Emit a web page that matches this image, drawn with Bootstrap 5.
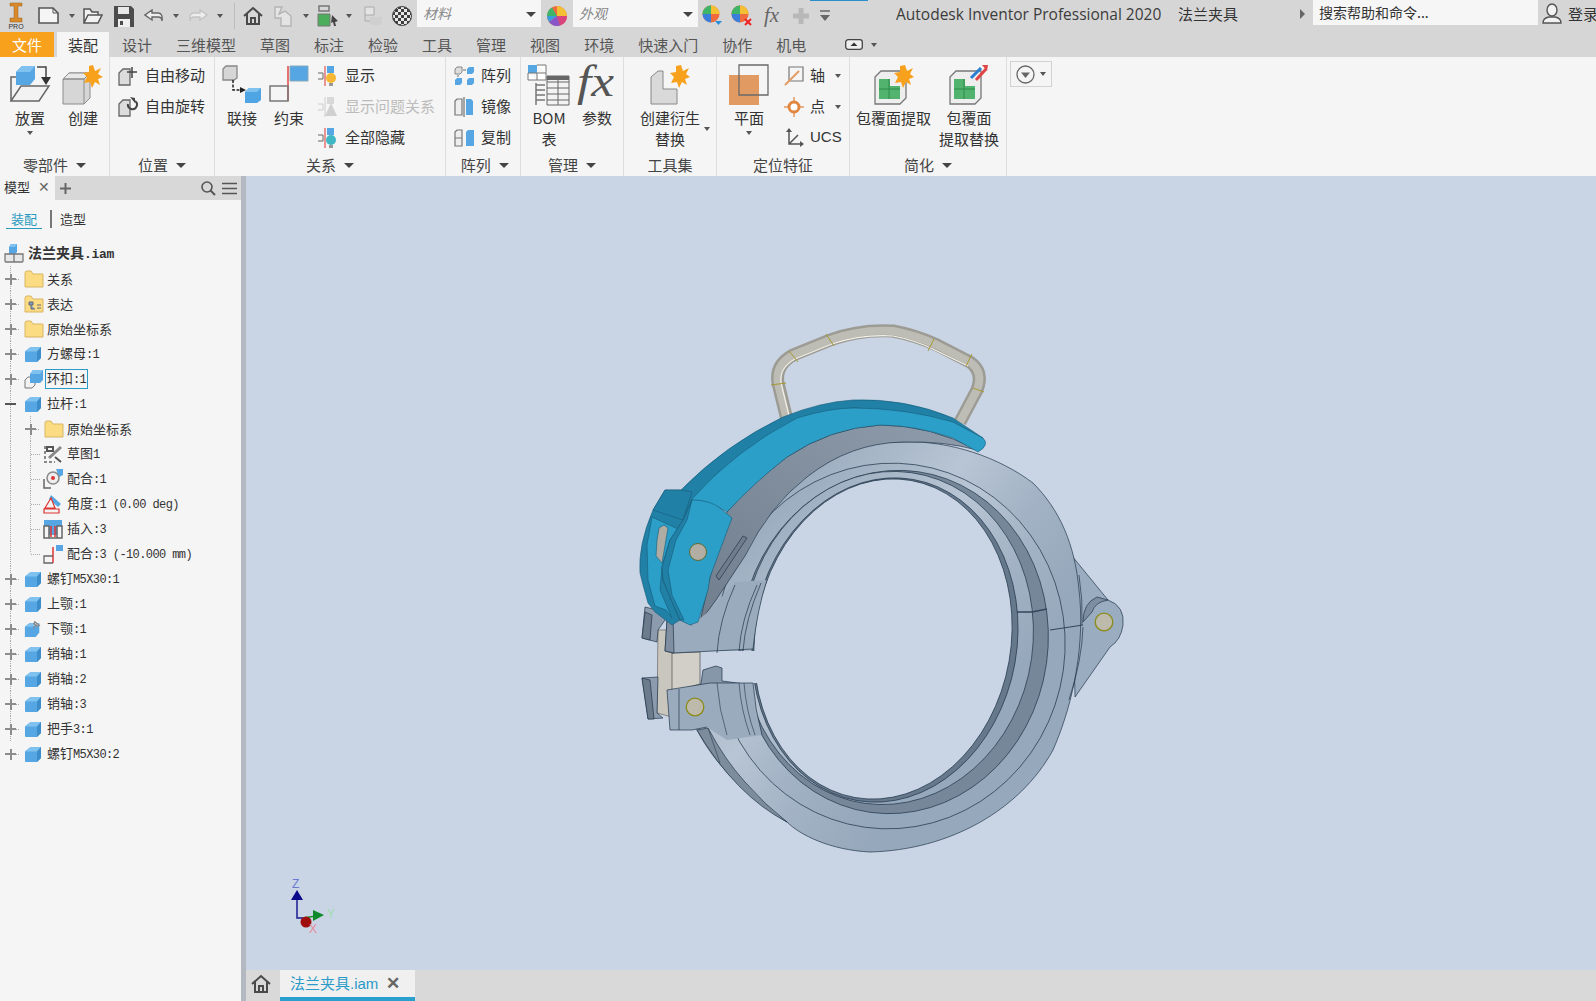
<!DOCTYPE html>
<html lang="zh">
<head>
<meta charset="utf-8">
<title>Autodesk Inventor Professional 2020</title>
<link href="https://cdn.jsdelivr.net/npm/bootstrap@5.3.0/dist/css/bootstrap.min.css" rel="stylesheet">
<style>
html,body{margin:0;height:1001px;overflow:hidden;background:#f5f5f5;color:#333;font-family:"Noto Sans CJK SC","Liberation Sans",sans-serif;font-size:15px}
svg{display:block;flex:none}
.defs-box{width:0;height:0;overflow:hidden}
.app{width:1596px;height:1001px;overflow:hidden}
/* top bar */
.topbar{height:32px;background:#d6d6d6}
.topbar>*{flex:none}
.m1{margin-left:1px}.m2{margin-left:2px}.m3{margin-left:3px}.m4{margin-left:4px}.m5{margin-left:5px}.m6{margin-left:6px}.m7{margin-left:7px}.m8{margin-left:8px}.m9{margin-left:9px}.m10{margin-left:10px}.m11{margin-left:11px}.m12{margin-left:12px}.m14{margin-left:14px}
.tri{width:0;height:0;border-left:3.5px solid transparent;border-right:3.5px solid transparent;border-top:4px solid #555;flex:none}
.tri.big{border-left-width:5px;border-right-width:5px;border-top-width:5px;border-top-color:#444}
.vsep{width:1px;height:26px;background:#bdbdbd}
.tinput{height:27px;background:#f6f6f6;font-style:italic;color:#888;font-size:14px;align-self:flex-start;padding-left:6px}
.w-mat{width:124px;margin-left:5px}
.w-app{width:125px;margin-left:5px}
.tinput .tri{margin-right:5px;margin-top:2px}
.toptitle{margin-left:66px;font-family:"Open Sans","Liberation Sans",sans-serif;font-size:15.5px;color:#3c3c3c;white-space:nowrap;width:268px;padding-bottom:3px}
.topdoc{margin-left:14px;width:63px;font-size:15px;white-space:nowrap;padding-bottom:4px}
.tri-r{width:0;height:0;border-top:5px solid transparent;border-bottom:5px solid transparent;border-left:5px solid #666;margin-left:59px;margin-bottom:4px}
.searchbox{width:225px;height:25px;background:#f6f6f6;margin-left:8px;padding-left:6px;font-size:14px;line-height:25px;align-self:flex-start}
.login{margin-left:6px;font-size:15px;white-space:nowrap;padding-bottom:4px}
.bluemark{position:absolute;left:810px;top:0;width:58px;height:1px;background:#2a8fc8}
.upicon{margin-bottom:4px}
/* tabs */
.tabstrip{height:25px;background:#d6d6d6;line-height:25px}
.rtab{padding:0 12px;color:#555;white-space:nowrap}
.rtab.file{width:54px;padding:0;text-align:center;background:#f7a11d;color:#fff}
.rtab.on{width:52px;margin-left:3px;padding:0;text-align:center;background:#f5f5f5;color:#333;margin-right:1px}
.rtab.view{padding:0;margin-left:27px}
/* ribbon */
.ribbon{height:119px;background:#f5f5f5}
.rgrp{height:119px;border-right:1px solid #dedede;flex:none}
.g1{width:110px}.g2{width:105px}.g3{width:231px}.g4{width:75px}.g5{width:103px}.g6{width:93px}.g7{width:133px}.g8{width:157px}
.rbody{height:97px;display:flex}
.rlabel{height:22px;line-height:20px;gap:8px;color:#444;white-space:nowrap}
.rbig{display:flex;flex-direction:column;align-items:center;padding-top:8px;line-height:20.5px;text-align:center;flex:none;white-space:nowrap}
.rbig svg{margin-bottom:3px;overflow:visible}
.w40{width:40px}.w42{width:42px}.w50{width:50px}.w62{width:62px}.w75{width:75px}.w60{width:60px}
.p7{padding-left:7px}.p8{padding-left:8px}.p10{padding-left:10px}.p12{padding-left:12px}.p15{padding-left:15px}.p6{padding-left:6px}
.rows{display:flex;flex-direction:column;padding-top:3px;flex:none}
.rsmall{height:31px;display:flex;align-items:center;gap:7px;white-space:nowrap}
.rsmall.tight{gap:6px}
.muted{color:#bcbcbc}
.rbig .tri{margin-top:2px}
.after-tri{margin:70px 0 0 3px}
.gapl7{margin-left:7px}.gapl6{margin-left:6px}.gapl8{margin-left:8px}.gapl13{margin-left:13px}.gapl15{margin-left:15px}.gapl19{margin-left:19px}
.extra{width:42px;height:26px;margin:4px 0 0 3px;border:1px solid #d2d2d2;gap:5px}
/* main */
.mainarea{height:825px}
.side{width:241px;background:#f5f5f5;flex:none}
.split{width:5px;background:#b4b9c1;flex:none}
.sidehead{height:24px;background:#d8d8d8}
.sidetab{width:55px;height:24px;background:#f5f5f5;font-size:13px;padding:0 0 2px 4px;gap:8px}
.xclose{color:#666;font-size:14px;font-family:"Liberation Sans",sans-serif}
.subtabs{height:38px;font-size:13px;padding-left:6px;margin-bottom:2px}
.subon{width:36px;text-align:center;color:#2a9ac0;border-bottom:1px solid #2a9ac0;line-height:17px;height:19px;margin-top:1px}
.subbar{width:2px;height:18px;background:#777;margin:0 8px}
.trow{height:25px;display:flex;align-items:center;font-size:13px;white-space:nowrap;color:#333}
.ttxt{margin-left:3px;padding:0 2px}
.ttxt.m1{margin-left:1px}
.ttxt.m2{margin-left:2px}
.lat{font-family:"Liberation Mono",monospace;font-size:12px;letter-spacing:-.6px}
.rootrow{font-weight:700;padding-left:4px;height:26px;font-size:14px}
.rootrow .ttxt{margin-left:2px}
.rootrow .lat{font-size:13px;font-weight:700;letter-spacing:-.3px}
.dotv{background:repeating-linear-gradient(#aaa 0 1px,transparent 1px 2px) 10px 0/1px 100% no-repeat}
.tcell{width:20px;height:25px;flex:none}
.texp{width:20px;height:25px;flex:none;margin-right:4px;background:
 linear-gradient(#8c8c8c,#8c8c8c) 5px 12px/11px 2px no-repeat,
 linear-gradient(#8c8c8c,#8c8c8c) 9.5px 7.5px/2px 11px no-repeat,
 repeating-linear-gradient(90deg,#aaa 0 1px,transparent 1px 2px) 16px 12.5px/8px 1px no-repeat,
 repeating-linear-gradient(#aaa 0 1px,transparent 1px 2px) 10px 0/1px 100% no-repeat}
.texp.minus{background:linear-gradient(#555,#555) 5px 12px/11px 2px no-repeat,repeating-linear-gradient(#aaa 0 1px,transparent 1px 2px) 10px 0/1px 100% no-repeat}
.texp.last{background:
 linear-gradient(#8c8c8c,#8c8c8c) 5px 12px/11px 2px no-repeat,
 linear-gradient(#8c8c8c,#8c8c8c) 9.5px 7.5px/2px 11px no-repeat,
 repeating-linear-gradient(90deg,#aaa 0 1px,transparent 1px 2px) 16px 12.5px/8px 1px no-repeat}
.tleaf{width:20px;height:25px;flex:none;margin-right:3px;background:
 repeating-linear-gradient(90deg,#aaa 0 1px,transparent 1px 2px) 11px 12.5px/10px 1px no-repeat,
 repeating-linear-gradient(#aaa 0 1px,transparent 1px 2px) 10px 0/1px 100% no-repeat}
.tleaf.end{background:
 repeating-linear-gradient(90deg,#aaa 0 1px,transparent 1px 2px) 11px 12.5px/10px 1px no-repeat,
 repeating-linear-gradient(#aaa 0 1px,transparent 1px 2px) 10px 0/1px 50% no-repeat}
.selbox{border:1px solid #2a9ac8;padding:0 1px;line-height:16px;margin-left:1px}
/* canvas */
.workcol{width:1350px}
.cv{width:1350px;height:794px;background:#c9d5e5}
.doctabs{height:31px;background:#d9d9d9}
.doctab{width:135px;height:31px;margin-left:9px;background:#f0f0f0;border-bottom:4px solid #2aa0cf;color:#2a9ac8;font-size:15px;padding:0 15px 0 10px;justify-content:space-between}
.doctab .xclose{font-size:17px;font-weight:700;color:#666}
.dt-lat{font-family:"Liberation Sans",sans-serif}
.fxsvg{overflow:visible}
</style>
</head>
<body>
<svg class="defs-box" aria-hidden="true">
<defs>
<symbol id="cube" viewBox="0 0 18 18"><path d="M1 6.5 6 2.5Q7 2 9 2H17V13L13 17H2Q1 17 1 16Z" fill="#55a6e2"/><path d="M1 6.5 6 2.5Q7 2 9 2H17L13 6.5Z" fill="#7fc1ef"/><path d="M13 6.5 17 2V13L13 17Z" fill="#3e8dcb"/></symbol>
<symbol id="cubegrey" viewBox="0 0 20 20"><path d="M1 11 4 8H11V16L8 19H1Z" fill="#f2f2f2" stroke="#777"/><path d="M6 5 9 1H19V11L16 14H6Z" fill="#55a6e2"/><path d="M6 5 9 1H19L16 5Z" fill="#7fc1ef"/></symbol>
<symbol id="cubepin" viewBox="0 0 20 20"><path d="M1 7.5 6 3.5H17V14L13 19H1Z" fill="#55a6e2"/><path d="M1 7.5 6 3.5H17L13 7.5Z" fill="#7fc1ef"/><path d="M10 9 13 6M12 2 17 6 15 7 11 4Z" stroke="#888" stroke-width="1.4" fill="#ddd"/></symbol>
<symbol id="rootasm" viewBox="0 0 20 20"><path d="M5 4 7 1H13V9L11 11H5Z" fill="#55a6e2"/><path d="M5 4 7 1H13L11 4Z" fill="#7fc1ef"/><path d="M1 11H19V18Q19 19 18 19H2Q1 19 1 18ZM10 11V19" fill="#e8e8e8" stroke="#777" stroke-width="1.3"/></symbol>
<symbol id="folder" viewBox="0 0 20 18"><path d="M1 3Q1 1 3 1H7L9 4H19V17H1Z" fill="#fbdc82" stroke="#d9b565"/></symbol>
<symbol id="folderpos" viewBox="0 0 20 18"><path d="M1 3Q1 1 3 1H7L9 4H19V17H1Z" fill="#fbdc82" stroke="#d9b565"/><path d="M5 7H9V10H5ZM7 10V14H11M13 10H17M13 13H17" fill="#7b9fbe" stroke="#667" /></symbol>
<symbol id="sketch" viewBox="0 0 20 20"><path d="M2 2V17M1 18H12" stroke="#666" stroke-width="1.5" stroke-dasharray="3 2" fill="none"/><path d="M6 14 18 3" stroke="#888" stroke-width="3"/><path d="M4 3H10V7H4ZM12 13 18 18" stroke="#555" stroke-width="2" fill="none"/></symbol>
<symbol id="mate" viewBox="0 0 20 20"><path d="M13 0H20V6L16 8Z" fill="#55a6e2"/><circle cx="10" cy="9" r="6" fill="#eee" stroke="#888" stroke-width="1.5"/><circle cx="10" cy="9" r="2" fill="#d33"/><path d="M1 10V19H8" fill="none" stroke="#666" stroke-width="1.5"/></symbol>
<symbol id="angle" viewBox="0 0 20 20"><path d="M8 1 18 10 15 13 6 5Z" fill="#55a6e2"/><path d="M2 14 8 4 12 14ZM1 15H16V19H1Z" fill="#f3f3f3" stroke="#d33" stroke-width="1.2"/></symbol>
<symbol id="insert" viewBox="0 0 20 20"><path d="M1 1H19V7H14V16H6V7H1Z" fill="#55a6e2"/><path d="M1 7H6V19H1ZM14 7H19V19H14ZM6 19H14" fill="none" stroke="#666" stroke-width="1.5"/><path d="M8 7V18M12 7V18" stroke="#d33" stroke-width="1.5"/></symbol>
<symbol id="mate3" viewBox="0 0 20 20"><path d="M13 1H20V7H13Z" fill="#55a6e2"/><path d="M10 3V19" stroke="#d33" stroke-width="1.5"/><path d="M10 12H1V19H10" fill="none" stroke="#666" stroke-width="1.3"/></symbol>
<symbol id="hometop" viewBox="0 0 20 20"><path d="M1 10 10 2 19 10M4 8V18H16V8M8 18V12H12V18" fill="none" stroke="#4a4a4a" stroke-width="2"/></symbol>
</defs>
</svg>

<div class="app d-flex flex-column position-relative">
  <div class="bluemark"></div>
  <!-- title bar -->
  <div class="topbar d-flex align-items-center">
    <svg class="m8" width="16" height="28" viewBox="0 0 16 28"><path d="M2 1H14V4H10V16H14V20H2V16H6V4H2Z" fill="#d98a2b" stroke="#9a5f1c" stroke-width=".5"/><text x="8" y="27" font-size="7" text-anchor="middle" fill="#333" font-family="Liberation Sans">PRO</text></svg>
    <svg class="m14" width="22" height="20" viewBox="0 0 22 20"><path d="M1 2H15L20 7V17H1Z" fill="#f5f5f5" stroke="#555" stroke-width="1.6"/><path d="M15 2V7H20" fill="none" stroke="#555"/></svg>
    <span class="tri m9"></span>
    <svg class="m8" width="20" height="18" viewBox="0 0 20 18"><path d="M1 16V2H7L9 5H15V8M1 16 5 8H19L15 16Z" fill="#f2f2f2" stroke="#555" stroke-width="1.5"/></svg>
    <svg class="m11" width="20" height="21" viewBox="0 0 20 21"><path d="M0 0H17L20 3V21H0Z" fill="#4c4c4c"/><path d="M4 1H15V8H4Z" fill="#e8e8e8"/><path d="M4 13H16V21H4Z" fill="#f0f0f0"/><path d="M6 15H9V19H6Z" fill="#4c4c4c"/></svg>
    <svg class="m10" width="20" height="14" viewBox="0 0 20 14"><path d="M8 1 1 6 8 11V8H14Q18 8 18 12 19 4 14 4H8Z" fill="#eee" stroke="#666" stroke-width="1.4"/></svg>
    <span class="tri m9"></span>
    <svg class="m9" width="20" height="14" viewBox="0 0 20 14"><path d="M12 1 19 6 12 11V8H6Q2 8 2 12 1 4 6 4H12Z" fill="#eee" stroke="#c4c4c4" stroke-width="1.4"/></svg>
    <span class="tri m9"></span>
    <span class="vsep m11"></span>
    <svg class="m8" width="20" height="20"><use href="#hometop"/></svg>
    <svg class="m10" width="20" height="22" viewBox="0 0 20 22"><path d="M2 2H9L6 9 12 6 18 11V21H8V13H2Z" fill="#e4e4e4" stroke="#b4b4b4" stroke-width="1.4"/></svg>
    <span class="tri m10"></span>
    <svg class="m8" width="22" height="24" viewBox="0 0 22 24"><path d="M2 2H12V7H2Z" fill="none" stroke="#777" stroke-width="1.5"/><path d="M1 10H13V22H1Z" fill="#4cae5a" stroke="#777"/><path d="M15 11 21 17 18 18 19 22 17 22 16 18 14 19Z" fill="#444"/></svg>
    <span class="tri m7"></span>
    <svg class="m10" width="20" height="22" viewBox="0 0 20 22"><path d="M3 2H12V10H3Z" fill="#e4e4e4" stroke="#aaa"/><path d="M8 12H20V20H8Z" fill="#cfcfcf"/><path d="M3 10V16H8" fill="none" stroke="#aaa"/></svg>
    <svg class="m10" width="20" height="20" viewBox="0 0 20 20"><defs><pattern id="chk" width="6" height="6" patternUnits="userSpaceOnUse"><rect width="6" height="6" fill="#e8e8e8"/><rect width="3" height="3" fill="#3e3e3e"/><rect x="3" y="3" width="3" height="3" fill="#3e3e3e"/></pattern></defs><circle cx="10" cy="10" r="9.5" fill="url(#chk)" stroke="#444"/></svg>
    <div class="tinput w-mat d-flex align-items-center justify-content-between"><span>材料</span><span class="tri big"></span></div>
    <svg class="m5" width="22" height="22" viewBox="0 0 22 22"><circle cx="11" cy="11" r="10" fill="#ef6a3c"/><path d="M11 11V1A10 10 0 0 1 21 11Z" fill="#f3c033"/><path d="M11 11H21A10 10 0 0 1 14 20.5Z" fill="#d8447e"/><path d="M11 11 14 20.5A10 10 0 0 1 3 17Z" fill="#8a55c8"/><path d="M11 11 3 17A10 10 0 0 1 1 11Z" fill="#3a9edc"/><path d="M11 11H1A10 10 0 0 1 6 2.5Z" fill="#3fb56a"/></svg>
    <div class="tinput w-app d-flex align-items-center justify-content-between"><span>外观</span><span class="tri big"></span></div>
    <svg class="m4" width="21" height="22" viewBox="0 0 21 22"><circle cx="9" cy="9" r="8.5" fill="#ef6a3c"/><path d="M9 9V.5A8.5 8.5 0 0 1 17.5 9Z" fill="#f3c033"/><path d="M9 9H.5A8.5 8.5 0 0 1 9 .5Z" fill="#3fb56a"/><path d="M9 9 .5 9A8.5 8.5 0 0 0 9 17.5Z" fill="#3a7edc"/><path d="M13 16H20L16.500 20Z" fill="#2a8fd8"/></svg>
    <svg class="m8" width="21" height="22" viewBox="0 0 21 22"><circle cx="9" cy="9" r="8.5" fill="#ef6a3c"/><path d="M9 9V.5A8.5 8.5 0 0 1 17.5 9Z" fill="#f3c033"/><path d="M9 9H.5A8.5 8.5 0 0 1 9 .5Z" fill="#3fb56a"/><path d="M9 9 .5 9A8.5 8.5 0 0 0 9 17.5Z" fill="#3a7edc"/><path d="M14 14 20 20M20 14 14 20" stroke="#e22" stroke-width="2"/></svg>
    <svg class="m10 fxsvg" width="20" height="20" viewBox="0 0 20 20"><text x="2" y="16" font-family="Liberation Serif" font-style="italic" font-size="21" fill="#666">fx</text></svg>
    <svg class="m11" width="16" height="16" viewBox="0 0 16 16"><path d="M5.500 0H10.500V5.500H16V10.500H10.500V16H5.500V10.500H0V5.500H5.500Z" fill="#b8b8b8"/></svg>
    <svg class="m11" width="10" height="12" viewBox="0 0 10 12"><path d="M0 1H10" stroke="#666" stroke-width="1.500"/><path d="M0 5H10L5 11Z" fill="#666"/></svg>
    <div class="toptitle">Autodesk Inventor Professional 2020</div>
    <div class="topdoc">法兰夹具</div>
    <span class="tri-r"></span>
    <div class="searchbox">搜索帮助和命令...</div>
    <svg class="m4 upicon" width="20" height="22" viewBox="0 0 20 22"><ellipse cx="10" cy="7" rx="5" ry="6" fill="#f2f2f2" stroke="#555" stroke-width="1.4"/><path d="M1 20Q1 15 7 14H13Q19 15 19 20Z" fill="#f2f2f2" stroke="#555" stroke-width="1.4"/></svg>
    <div class="login">登录</div>
  </div>

  <!-- ribbon tabs -->
  <div class="tabstrip d-flex">
    <div class="rtab file">文件</div>
    <div class="rtab on">装配</div>
    <div class="rtab">设计</div>
    <div class="rtab">三维模型</div>
    <div class="rtab">草图</div>
    <div class="rtab">标注</div>
    <div class="rtab">检验</div>
    <div class="rtab">工具</div>
    <div class="rtab">管理</div>
    <div class="rtab">视图</div>
    <div class="rtab">环境</div>
    <div class="rtab">快速入门</div>
    <div class="rtab">协作</div>
    <div class="rtab">机电</div>
    <div class="rtab view d-flex align-items-center gap-2">
      <svg width="18" height="11" viewBox="0 0 18 11"><rect x=".7" y=".7" width="16.600" height="9.600" rx="2.500" fill="#eee" stroke="#444" stroke-width="1.300"/><path d="M5.500 7 9 3.500 12.500 7Z" fill="#333"/></svg>
      <span class="tri"></span>
    </div>
  </div>

  <!-- ribbon -->
  <div class="ribbon d-flex">
    <div class="rgrp g1">
      <div class="rbody p10">
        <div class="rbig w40">
          <svg width="40" height="40" viewBox="0 0 40 40"><path d="M1 36V12H12M1 36 11 21H39L29 36Z" fill="#f2f2f2" stroke="#666" stroke-width="1.500"/><path d="M6 7 12 1H25V14L20 20H6Z" fill="#55a6e2"/><path d="M6 7 12 1H25L20 7Z" fill="#7fc1ef"/><path d="M27 2H36V14" fill="none" stroke="#444" stroke-width="1.500"/><path d="M31 12H41L36 20Z" fill="#333"/></svg>
          放置<span class="tri"></span>
        </div>
        <div class="rbig w40 gapl13">
          <svg width="40" height="40" viewBox="0 0 40 40"><path d="M0 14 6 8H27V33L21 39H0Z" fill="#d6d6d6" stroke="#8c8c8c"/><path d="M0 14 6 8H27L21 14Z" fill="#e8e8e8" stroke="#8c8c8c"/><path d="M21 14V39M21 14H0" stroke="#8c8c8c" fill="none"/><path d="M30 0 32 6 38 3 35 9 40 12 35 14 37 20 32 17 29 23 27 17 21 18 24 12 20 8 26 7 26 1Z" fill="#f7a11d"/></svg>
          创建
        </div>
      </div>
      <div class="rlabel d-flex justify-content-center align-items-center">零部件<span class="tri big"></span></div>
    </div>

    <div class="rgrp g2">
      <div class="rbody p8"><div class="rows">
        <div class="rsmall"><svg width="20" height="20" viewBox="0 0 20 20"><path d="M1 7 5 3H12V19H1Z" fill="#dcdcdc" stroke="#666" stroke-width="1.300"/><path d="M14 1V12M9 6H19" stroke="#444" stroke-width="1.500"/></svg>自由移动</div>
        <div class="rsmall"><svg width="20" height="20" viewBox="0 0 20 20"><path d="M1 7 5 3H12V19H1Z" fill="#dcdcdc" stroke="#666" stroke-width="1.300"/><path d="M10 7A4.500 4.500 0 1 0 17 4" fill="none" stroke="#444" stroke-width="2"/><path d="M12 0 17 1V6Z" fill="#444"/></svg>自由旋转</div>
      </div></div>
      <div class="rlabel d-flex justify-content-center align-items-center">位置<span class="tri big"></span></div>
    </div>

    <div class="rgrp g3">
      <div class="rbody p7">
        <div class="rbig w40">
          <svg width="40" height="40" viewBox="0 0 40 40"><path d="M1 4 4 1H15V13L12 15H1Z" fill="#d6d6d6" stroke="#888" stroke-width="1.300"/><path d="M11 15V25H19" fill="none" stroke="#222" stroke-width="1.500" stroke-dasharray="3 1.500"/><path d="M18 22 24 25 18 28Z" fill="#222"/><path d="M23 27 27 23H39V35L35 38H23Z" fill="#4fa5e4"/><path d="M23 27 27 23H39L35 27Z" fill="#7fc1ef"/></svg>
          联接
        </div>
        <div class="rbig w40 gapl7">
          <svg width="40" height="40" viewBox="0 0 40 40"><path d="M21 1H39V16H21Z" fill="#55a6e2" stroke="#8ab"/><path d="M19 1V36" stroke="#e04545" stroke-width="1.500"/><path d="M1 21H19V36H1Z" fill="none" stroke="#777" stroke-width="1.500"/></svg>
          约束
        </div>
        <div class="rows gapl8">
          <div class="rsmall"><svg width="20" height="20" viewBox="0 0 20 20"><path d="M1 7H6V13H1" fill="none" stroke="#666"/><path d="M8 0V20" stroke="#d33"/><path d="M10 0H17V7H10Z" fill="#55a6e2"/><circle cx="14" cy="12" r="5" fill="#f7b733"/><path d="M12 17H16V20H12Z" fill="#999"/></svg><span class="m1">显示</span></div>
          <div class="rsmall muted"><svg width="20" height="20" viewBox="0 0 20 20"><path d="M1 7H6V13H1" fill="none" stroke="#ccc"/><path d="M8 0V20" stroke="#ccc"/><path d="M10 0H17V7H10Z" fill="#d8d8d8"/><path d="M14 6 20 19H8Z" fill="#d0d0d0"/></svg><span class="m1">显示问题关系</span></div>
          <div class="rsmall"><svg width="20" height="20" viewBox="0 0 20 20"><path d="M1 7H6V13H1" fill="none" stroke="#666"/><path d="M8 0V20" stroke="#d33"/><path d="M10 0H17V7H10Z" fill="#55a6e2"/><circle cx="14" cy="12" r="5" fill="#3fb7c4"/><path d="M12 17H16V20H12Z" fill="#999"/></svg><span class="m1">全部隐藏</span></div>
        </div>
      </div>
      <div class="rlabel d-flex justify-content-center align-items-center">关系<span class="tri big"></span></div>
    </div>

    <div class="rgrp g4">
      <div class="rbody p8"><div class="rows">
        <div class="rsmall tight"><svg width="20" height="20" viewBox="0 0 20 20"><path d="M1 3 3 1H8V6L6 8H1Z" fill="#ddd" stroke="#888"/><path d="M13 3 15 1H20V6L18 8H13ZM1 14 3 12H8V17L6 19H1ZM13 14 15 12H20V17L18 19H13Z" fill="#55a6e2"/><path d="M9 4H12M4 9V11" stroke="#666"/></svg><span class="m1">阵列</span></div>
        <div class="rsmall tight"><svg width="20" height="20" viewBox="0 0 20 20"><path d="M1 4 3 2H8V18H1Z" fill="#eee" stroke="#777" stroke-width="1.200"/><path d="M10 0V20" stroke="#555"/><path d="M12 2H17L19 4V18H12Z" fill="#55a6e2"/></svg><span class="m1">镜像</span></div>
        <div class="rsmall tight"><svg width="20" height="20" viewBox="0 0 20 20"><path d="M1 4 3 2H8V18H1ZM1 10H8" fill="#eee" stroke="#777" stroke-width="1.200"/><path d="M12 4 14 2H20V18H12Z" fill="#55a6e2"/></svg><span class="m1">复制</span></div>
      </div></div>
      <div class="rlabel d-flex justify-content-center align-items-center ps-1">阵列<span class="tri big"></span></div>
    </div>

    <div class="rgrp g5">
      <div class="rbody p7">
        <div class="rbig w42">
          <svg width="42" height="40" viewBox="0 0 42 40"><path d="M0 0H9V8H0Z" fill="#55a6e2"/><path d="M9 0H18V8M0 8H18V15H9V8M0 8V15H9" fill="#fff" stroke="#777"/><path d="M19 11H41V40H19ZM19 17H41M19 23H41M19 29H41M19 35H41M30 11V40" fill="#f3f3f3" stroke="#666"/><path d="M19 11H41V15H19Z" fill="#666"/><path d="M8 18V40M8 20H17M8 25H17M8 30H17M8 35H17" stroke="#777" fill="none" stroke-width="1.500"/></svg>
          <span>BOM<br>表</span>
        </div>
        <div class="rbig w42 gapl6">
          <svg width="42" height="40" viewBox="0 0 42 40"><text x="1" y="31" font-family="Liberation Serif" font-style="italic" font-size="44" textLength="37" lengthAdjust="spacingAndGlyphs" fill="#555">fx</text></svg>
          参数
        </div>
      </div>
      <div class="rlabel d-flex justify-content-center align-items-center">管理<span class="tri big"></span></div>
    </div>

    <div class="rgrp g6">
      <div class="rbody p15">
        <div class="rbig w62">
          <svg width="40" height="40" viewBox="0 0 40 40"><path d="M1 12 8 6H13V24H27V39H1Z" fill="#d9d9d9" stroke="#888"/><path d="M31 0 33 6 39 3 36 9 40 12 35 14 37 20 32 17 29 23 27 17 21 18 24 12 20 8 26 7 26 1Z" fill="#f7a11d"/></svg>
          <span>创建衍生<br>替换</span>
        </div>
        <span class="tri after-tri"></span>
      </div>
      <div class="rlabel d-flex justify-content-center align-items-center">工具集</div>
    </div>

    <div class="rgrp g7">
      <div class="rbody p12">
        <div class="rbig w40">
          <svg width="40" height="40" viewBox="0 0 40 40"><path d="M0 10H30V40H0Z" fill="#e29a63"/><path d="M10 0H39V30H10Z" fill="none" stroke="#6a6a6a" stroke-width="1.300"/></svg>
          平面<span class="tri"></span>
        </div>
        <div class="rows gapl15">
          <div class="rsmall tight"><svg width="20" height="20" viewBox="0 0 20 20"><path d="M5 1H19V15H5Z" fill="none" stroke="#777" stroke-width="1.200"/><path d="M1 19 15 5" stroke="#e29a63" stroke-width="2"/></svg>轴<span class="tri m4"></span></div>
          <div class="rsmall tight"><svg width="20" height="20" viewBox="0 0 20 20"><path d="M10 0V20M0 10H20" stroke="#e29a63" stroke-width="1.500"/><circle cx="10" cy="10" r="5" fill="#fff" stroke="#e2873f" stroke-width="3"/></svg>点<span class="tri m4"></span></div>
          <div class="rsmall tight"><svg width="20" height="20" viewBox="0 0 20 20"><path d="M5 3V16H19M5 16 14 7" stroke="#555" stroke-width="1.500" fill="none"/><path d="M2 4 5 0 8 4ZM16 13 20 16 16 19Z" fill="#555"/></svg><span class="dt-lat">UCS</span></div>
        </div>
      </div>
      <div class="rlabel d-flex justify-content-center align-items-center">定位特征</div>
    </div>

    <div class="rgrp g8">
      <div class="rbody p6">
        <div class="rbig w75">
          <svg width="40" height="40" viewBox="0 0 40 40"><path d="M1 12 7 6H32V33L26 39H1Z" fill="#eee" stroke="#777" stroke-width="1.300"/><path d="M5 14H16V21H26V34H5Z" fill="#52b36f"/><path d="M5 24H26M15 14V34" stroke="#2f8a4c"/><path d="M31 0 33 6 39 3 36 9 40 12 35 14 37 20 32 17 29 23 27 17 21 18 24 12 20 8 26 7 26 1Z" fill="#f7a11d"/></svg>
          包覆面提取
        </div>
        <div class="rbig w60 gapl8">
          <svg width="40" height="40" viewBox="0 0 40 40"><path d="M1 12 7 6H32V33L26 39H1Z" fill="#eee" stroke="#777" stroke-width="1.300"/><path d="M5 14H16V21H26V34H5Z" fill="#52b36f"/><path d="M5 24H26M15 14V34" stroke="#2f8a4c"/><path d="M22 13 32 3" stroke="#2a7fd0" stroke-width="3"/><path d="M27 15 37 4" stroke="#e04545" stroke-width="3"/><path d="M33 0 39 0 38 6Z" fill="#e04545"/></svg>
          <span>包覆面<br>提取替换</span>
        </div>
      </div>
      <div class="rlabel d-flex justify-content-center align-items-center">简化<span class="tri big"></span></div>
    </div>

    <div class="extra d-flex align-items-center justify-content-center">
      <svg width="19" height="19" viewBox="0 0 19 19"><circle cx="9.500" cy="9.500" r="8.500" fill="#f5f5f5" stroke="#666" stroke-width="1.300"/><path d="M5 7.500H14L9.500 13Z" fill="#666"/></svg>
      <span class="tri"></span>
    </div>
  </div>

  <!-- main area -->
  <div class="mainarea d-flex">
    <div class="side">
      <div class="sidehead d-flex align-items-center">
        <div class="sidetab d-flex align-items-center">模型<span class="xclose">✕</span></div>
        <svg class="m4" width="13" height="13" viewBox="0 0 13 13"><path d="M6.500 1V12M1 6.500H12" stroke="#666" stroke-width="2"/></svg>
        <svg class="ms-auto" width="16" height="16" viewBox="0 0 16 16"><circle cx="7" cy="7" r="5" fill="none" stroke="#555" stroke-width="1.600"/><path d="M10.500 10.500 15 15" stroke="#555" stroke-width="2"/></svg>
        <svg class="m6 me-1" width="15" height="13" viewBox="0 0 15 13"><path d="M0 1.500H15M0 6.500H15M0 11.500H15" stroke="#555" stroke-width="1.600"/></svg>
      </div>
      <div class="subtabs d-flex align-items-center">
        <div class="subon">装配</div><span class="subbar"></span><span>造型</span>
      </div>
      <div class="tree">
        <div class="trow rootrow"><svg width="20" height="20"><use href="#rootasm"/></svg><span class="ttxt">法兰夹具<span class="lat">.iam</span></span></div>
        <div class="trow"><span class="texp"></span><svg width="20" height="18"><use href="#folder"/></svg><span class="ttxt m1">关系</span></div>
        <div class="trow"><span class="texp"></span><svg width="20" height="18"><use href="#folderpos"/></svg><span class="ttxt m1">表达</span></div>
        <div class="trow"><span class="texp"></span><svg width="20" height="18"><use href="#folder"/></svg><span class="ttxt m1">原始坐标系</span></div>
        <div class="trow"><span class="texp"></span><svg width="18" height="18"><use href="#cube"/></svg><span class="ttxt">方螺母<span class="lat">:1</span></span></div>
        <div class="trow"><span class="texp"></span><svg width="20" height="20"><use href="#cubegrey"/></svg><span class="selbox">环扣<span class="lat">:1</span></span></div>
        <div class="trow"><span class="texp minus"></span><svg width="18" height="18"><use href="#cube"/></svg><span class="ttxt">拉杆<span class="lat">:1</span></span></div>
        <div class="trow"><span class="tcell dotv"></span><span class="texp"></span><svg width="20" height="18"><use href="#folder"/></svg><span class="ttxt m1">原始坐标系</span></div>
        <div class="trow"><span class="tcell dotv"></span><span class="tleaf"></span><svg width="20" height="20"><use href="#sketch"/></svg><span class="ttxt m2">草图<span class="lat">1</span></span></div>
        <div class="trow"><span class="tcell dotv"></span><span class="tleaf"></span><svg width="20" height="20"><use href="#mate"/></svg><span class="ttxt m2">配合<span class="lat">:1</span></span></div>
        <div class="trow"><span class="tcell dotv"></span><span class="tleaf"></span><svg width="20" height="20"><use href="#angle"/></svg><span class="ttxt m2">角度<span class="lat">:1 (0.00 deg)</span></span></div>
        <div class="trow"><span class="tcell dotv"></span><span class="tleaf"></span><svg width="20" height="20"><use href="#insert"/></svg><span class="ttxt m2">插入<span class="lat">:3</span></span></div>
        <div class="trow"><span class="tcell dotv"></span><span class="tleaf end"></span><svg width="20" height="20"><use href="#mate3"/></svg><span class="ttxt m2">配合<span class="lat">:3 (-10.000 mm)</span></span></div>
        <div class="trow"><span class="texp"></span><svg width="18" height="18"><use href="#cube"/></svg><span class="ttxt">螺钉<span class="lat">M5X30:1</span></span></div>
        <div class="trow"><span class="texp"></span><svg width="18" height="18"><use href="#cube"/></svg><span class="ttxt">上颚<span class="lat">:1</span></span></div>
        <div class="trow"><span class="texp"></span><svg width="18" height="18"><use href="#cubepin"/></svg><span class="ttxt">下颚<span class="lat">:1</span></span></div>
        <div class="trow"><span class="texp"></span><svg width="18" height="18"><use href="#cube"/></svg><span class="ttxt">销轴<span class="lat">:1</span></span></div>
        <div class="trow"><span class="texp"></span><svg width="18" height="18"><use href="#cube"/></svg><span class="ttxt">销轴<span class="lat">:2</span></span></div>
        <div class="trow"><span class="texp"></span><svg width="18" height="18"><use href="#cube"/></svg><span class="ttxt">销轴<span class="lat">:3</span></span></div>
        <div class="trow"><span class="texp"></span><svg width="18" height="18"><use href="#cube"/></svg><span class="ttxt">把手<span class="lat">3:1</span></span></div>
        <div class="trow"><span class="texp last"></span><svg width="18" height="18"><use href="#cube"/></svg><span class="ttxt">螺钉<span class="lat">M5X30:2</span></span></div>
      </div>
    </div>
    <div class="split"></div>
    <div class="workcol d-flex flex-column">
      <div class="cv">
        <svg width="1350" height="794" viewBox="246 176 1350 794">
          <defs>
            <linearGradient id="frt" gradientUnits="userSpaceOnUse" x1="800" y1="440" x2="1080" y2="660"><stop offset="0" stop-color="#97a9bc"/><stop offset=".4" stop-color="#b8c5d4"/><stop offset=".62" stop-color="#a3b3c5"/><stop offset=".85" stop-color="#96a8bb"/></linearGradient>
            <linearGradient id="gb" x1="0" y1="1" x2="1" y2="0"><stop offset="0" stop-color="#717e8d"/><stop offset="1" stop-color="#8f9cac"/></linearGradient>
          </defs>
          <g stroke="#22364a" stroke-width=".7">
            <!-- ear -->
            <path d="M1072 556 1108 600Q1125 606 1123 625Q1121 640 1110 647L1075 697Z" fill="#9aacbf"/>
            <path d="M1083 622Q1083 603 1097 597L1108 600Q1095 602 1092 612Z" fill="#7d8ea2"/>
            <!-- outer ring -->
            <path d="M903 442C950 440 1000 458 1033 483C1060 510 1075 545 1079 590C1085 640 1075 700 1053 750C1020 810 950 850 870 852C830 850 800 835 787 822C750 800 715 765 697 730C680 680 685 560 740 500C790 450 850 442 903 442Z" fill="url(#frt)"/>
            <path d="M697 730 708 728Q725 760 745 782Q765 805 787 822Q735 795 697 730Z" fill="#7d8c9c"/>
            <path d="M708 728 720 763" stroke="#3b4b5c" fill="none"/>
            <!-- front face edge -->
            <ellipse cx="890" cy="646" rx="175" ry="183" transform="rotate(8 890 646)" fill="url(#frt)"/>
            <!-- dark crescents made by offset ellipses -->
            <ellipse cx="894" cy="642" rx="154" ry="172" transform="rotate(8 894 642)" fill="#76879a"/>
            <ellipse cx="888" cy="638" rx="145" ry="167" transform="rotate(8 888 638)" fill="url(#frt)"/>
            <ellipse cx="885" cy="640" rx="132" ry="163" transform="rotate(10 885 640)" fill="#66788c"/>
            <ellipse cx="883" cy="639" rx="128" ry="161" transform="rotate(10 883 639)" fill="#c9d5e5"/>
            <!-- seams on the right -->
            <path d="M1017 612 1032 612 1047 609" fill="none" stroke="#33465a" stroke-width="1.500"/>
            <path d="M1050 630 1083 625" fill="none" stroke="#33465a" stroke-width="1.200"/>
            <path d="M1082 625Q1083 600 1079 575M1083 627Q1082 660 1069 700" fill="none"/>
            <!-- gap -->
            <path d="M640 651H770V683H640Z" fill="#c9d5e5" stroke="none"/>
            <path d="M640 560H690V652H640ZM640 682H692V735H640Z" fill="#c9d5e5" stroke="none"/>
            <!-- grey band -->
            <path d="M977 450Q930 425 880 425Q830 428 787 457Q750 485 727 512L710 577 700 622 716 600 745 556Q770 505 807 477Q850 443 903 442Q945 441 977 450Z" fill="url(#gb)"/>
            <path d="M747 538 743 536 716 576 719 580Z" fill="#6f7c8b"/>
            <!-- beige link -->
            <path d="M658 630H672L675 690 672 717 657 713Z" fill="#c9c6be" stroke="#666"/>
            <path d="M672 653 700 652V684L672 692Z" fill="#d2cfc8" stroke="#4a4a4a"/>
            <!-- back tabs -->
            <path d="M645 607 670 613 658 630 657 642 642 638Z" fill="#8c9cae"/>
            <path d="M645 612 642 638 650 640 652 615Z" fill="#6d7c8d"/>
            <path d="M642 678 658 677 657 713 663 718 648 719Z" fill="#8c9cae"/>
            <path d="M642 678 648 719 654 719 650 680Z" fill="#6d7c8d"/>
            <path d="M703 670 716 666 722 668 722 681 745 684 700 690Z" fill="#8697a9"/>
            <!-- upper jaw -->
            <path d="M667 620 673 617 692 625 708 612 735 582 767 580Q757 610 753 649L673 653 665 651Z" fill="#9aabbd" stroke="none"/>
            <path d="M767 580Q757 610 753 649L673 653 665 651 667 620 673 617 692 625" fill="none"/>
            <path d="M665 651 667 620 673 617 674 653Z" fill="#7f8fa1"/>
            <path d="M717 653Q719 620 735 585M739 651Q741 620 757 585M743 651Q745 620 761 583" fill="none"/>
            <!-- lower jaw -->
            <path d="M667 690 710 683 753 683Q755 710 762 735L727 740 707 727 692 730 670 730Z" fill="#9aabbd" stroke="none"/>
            <path d="M707 727 692 730 670 730 667 690 710 683 753 683Q755 710 762 735" fill="none"/>
            <path d="M717 683Q719 710 727 735M739 683Q741 710 750 735M744 683Q746 710 755 735" fill="none" stroke-width=".6"/>
            <path d="M679 689 679 730" fill="none"/>
          </g>
          <!-- wire handle -->
          <g fill="none" stroke-linejoin="round" stroke-linecap="butt">
            <path d="M787 420 778 383Q775 365 793 355L830 340Q860 329 893 331Q915 335 937 345L970 362Q984 372 977 390L960 422" stroke="#9c9b94" stroke-width="13"/>
            <path d="M787 420 778 383Q775 365 793 355L830 340Q860 329 893 331Q915 335 937 345L970 362Q984 372 977 390L960 422" stroke="#bdbcb5" stroke-width="8"/>
            <path d="M790 420 781 383Q779 368 795 359L832 344Q862 334 893 336Q915 340 935 350L968 366" stroke="#f4f2ea" stroke-width="1.100"/>
            <path d="M771 385 786 383M789 351 798 362M826 334 834 346M934 339 928 351M972 354 966 366M973 388 984 392" stroke="#a49a2f" stroke-width="1"/>
          </g>
          <!-- blue lever -->
          <g stroke="#175a78" stroke-width=".6">
            <path d="M640 573Q638 545 653 510L665 490H681Q725 445 783 417Q820 402 853 400Q905 398 953 418L983 438 975 443Q905 408 853 408Q790 418 737 458L692 500 683 520 670 540 662 567 663 580 670 597 680 620 672 625 655 612 648 603 643 585Z" fill="#2180a6"/>
            <path d="M691 500Q735 450 797 418Q830 408 853 408Q905 408 953 422L983 438Q990 445 978 452L953 438Q915 425 880 425Q830 428 787 457Q755 482 727 512L720 508Q705 500 691 500Z" fill="#2b9fc8"/>
            <path d="M653 510 665 490H681L692 492 683 520 653 510Z" fill="#2180a6"/>
            <path d="M652 517 680 530 670 540 664 560 662 567 660 590 672 618 666 610 655 606 648 580 647 545Z" fill="#2b9fc8"/>
            <path d="M659 528 664 525 668 528 662 563 656 556 657 540Z" fill="#afaca3"/>
            <path d="M692 500Q710 500 720 508L732 518 710 577 708 590 698 622 690 625 680 620 670 597 663 580 662 567 670 540 683 520Z" fill="#2b9fc8"/>
            <path d="M662 567 670 540 683 520 692 500 687 520 676 540 668 570 672 595 684 620 680 620 670 597 663 580Z" fill="#2180a6"/>
          </g>
          <!-- pins -->
          <g fill="#b3aea3" stroke="#5c6b2e">
            <circle cx="698" cy="552" r="8.500"/>
          </g>
          <g fill="#bdb9ab" stroke="#8b8b1c" stroke-width="1.300">
            <circle cx="695" cy="707" r="8.800"/>
            <circle cx="1104" cy="622" r="8.800"/>
          </g>
          <!-- triad -->
          <path d="M297 900V918H304" fill="none" stroke="#1a1a90" stroke-width="1.500"/>
          <path d="M303 918 316 916" stroke="#1a8f2a" stroke-width="1.500"/>
          <path d="M291 900 297 890 303 900Z" fill="#0a0a8a"/>
          <path d="M313 910 324 915 313 921Z" fill="#0f8a2a"/>
          <circle cx="306" cy="922" r="5.500" fill="#a00d0d"/>
          <text x="292" y="888" font-size="12" fill="#6a78d0" font-family="Liberation Sans">Z</text>
          <text x="327" y="918" font-size="12" fill="#9cdcac" font-family="Liberation Sans">Y</text>
          <text x="309" y="933" font-size="12" fill="#e48a9c" font-family="Liberation Sans">X</text>
        </svg>
      </div>
      <div class="doctabs d-flex">
        <svg class="m5 mt-1" width="20" height="20"><use href="#hometop"/></svg>
        <div class="doctab d-flex align-items-center"><span>法兰夹具<span class="dt-lat">.iam</span></span><span class="xclose">✕</span></div>
      </div>
    </div>
  </div>
</div>
</body>
</html>
